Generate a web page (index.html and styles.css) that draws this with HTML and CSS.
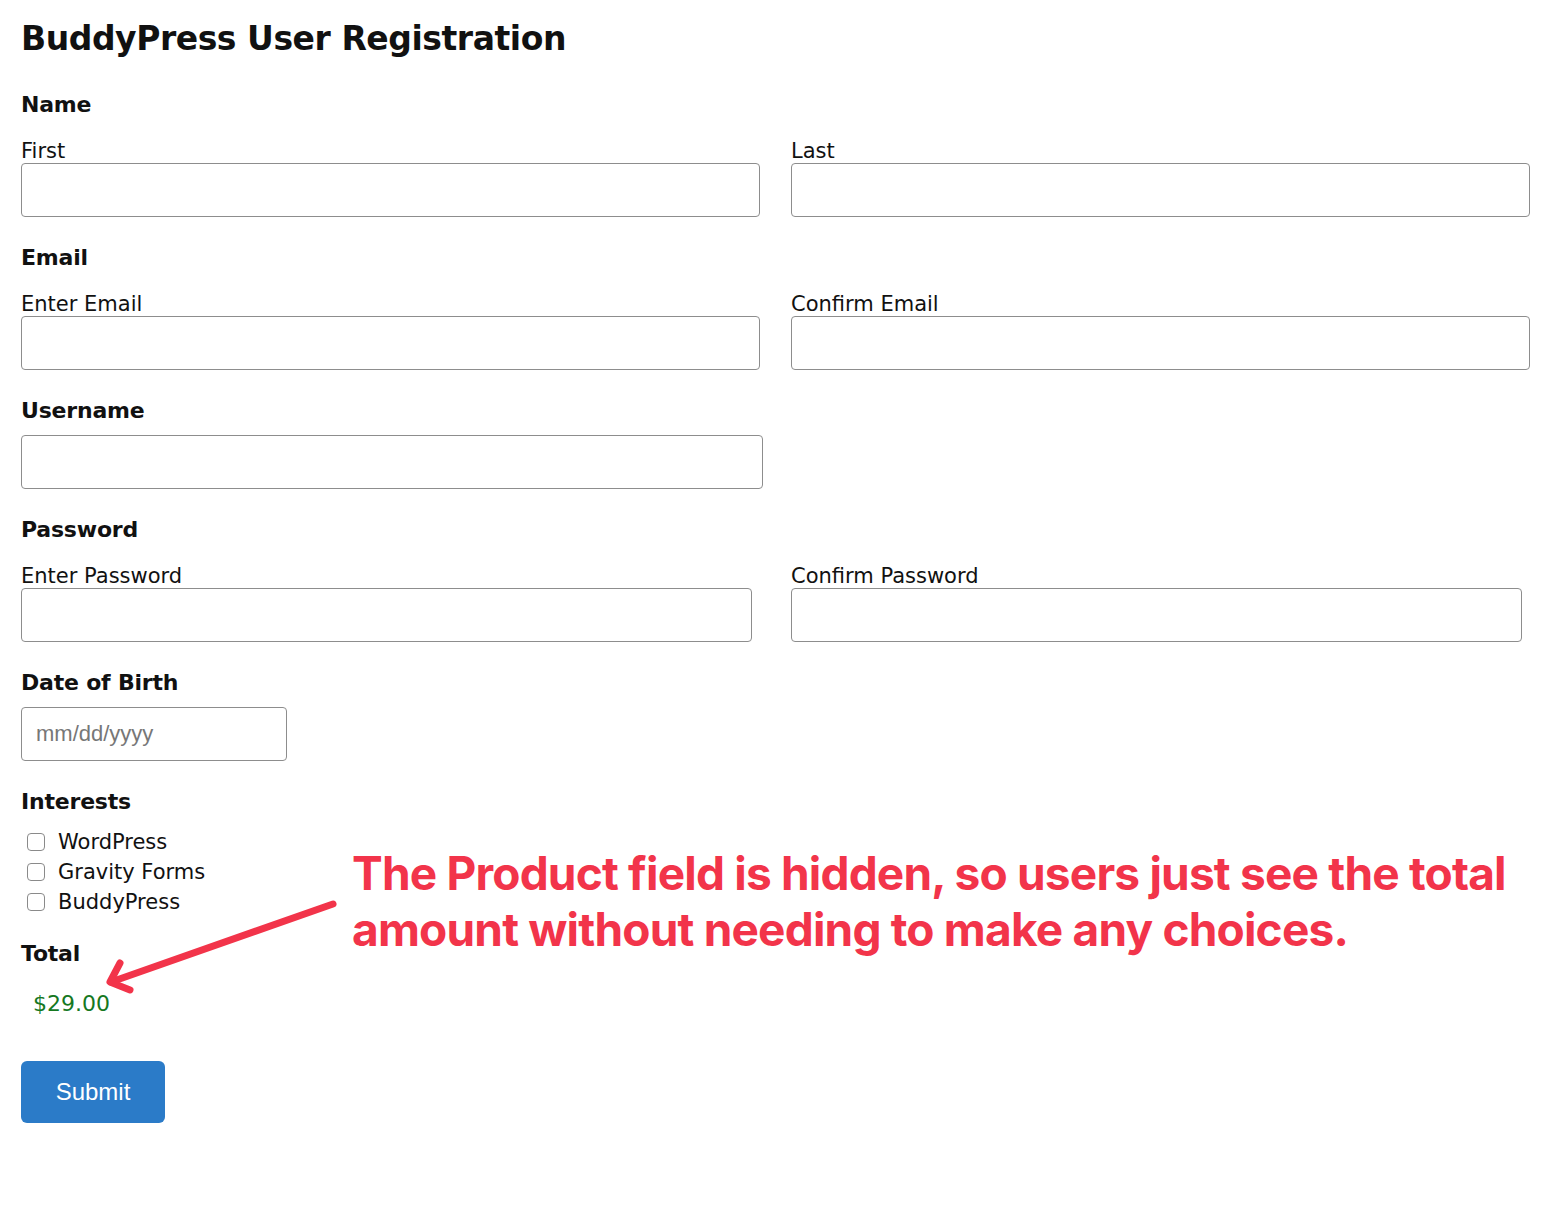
FILE: index.html
```html
<!DOCTYPE html>
<html lang="en">
<head>
    <meta charset="UTF-8">
    <meta name="viewport" content="width=device-width, initial-scale=1.0">
    <title>BuddyPress User Registration</title>
    <link rel="stylesheet" href="styles.css">
</head>
<body>
    <div class="page">
        <h1>BuddyPress User Registration</h1>

        <form class="reg-form" action="#" method="POST">
            <!-- Name -->
            <div class="field field-first">
                <div class="field-title">Name</div>
                <div class="pair">
                    <label class="sub">
                        <span>First</span>
                        <input type="text" name="first">
                    </label>
                    <label class="sub">
                        <span>Last</span>
                        <input type="text" name="last">
                    </label>
                </div>
            </div>

            <!-- Email -->
            <div class="field">
                <div class="field-title">Email</div>
                <div class="pair">
                    <label class="sub">
                        <span>Enter Email</span>
                        <input type="email" name="email">
                    </label>
                    <label class="sub">
                        <span>Confirm Email</span>
                        <input type="email" name="email2">
                    </label>
                </div>
            </div>

            <!-- Username -->
            <div class="field">
                <div class="field-title">Username</div>
                <input class="single username" type="text" name="username">
            </div>

            <!-- Password -->
            <div class="field">
                <div class="field-title">Password</div>
                <div class="pair pair-pass">
                    <label class="sub">
                        <span>Enter Password</span>
                        <input type="password" name="pass">
                    </label>
                    <label class="sub">
                        <span>Confirm Password</span>
                        <input type="password" name="pass2">
                    </label>
                </div>
            </div>

            <!-- Date of Birth -->
            <div class="field">
                <div class="field-title">Date of Birth</div>
                <input class="single dob" type="text" name="dob" placeholder="mm/dd/yyyy">
            </div>

            <!-- Interests -->
            <div class="field">
                <div class="field-title">Interests</div>
                <ul class="checks">
                    <li><label><input type="checkbox" name="int[]" value="wp"> WordPress</label></li>
                    <li><label><input type="checkbox" name="int[]" value="gf"> Gravity Forms</label></li>
                    <li><label><input type="checkbox" name="int[]" value="bp"> BuddyPress</label></li>
                </ul>
            </div>

            <!-- Total -->
            <div class="field field-total">
                <div class="field-title">Total</div>
                <div class="total">$29.00</div>
            </div>

            <button type="submit" class="submit-btn">Submit</button>
        </form>

        <!-- Пояснение поверх формы -->
        <div class="note">The Product field is hidden, so users just see the total amount without needing to make any choices.</div>
        <svg class="note-arrow" width="360" height="140" viewBox="0 0 360 140">
            <path d="M333 44 L111 122" fill="none" stroke="#f2344a" stroke-width="7" stroke-linecap="round"/>
            <path d="M120 103 L110 122 L130 130" fill="none" stroke="#f2344a" stroke-width="7" stroke-linecap="round" stroke-linejoin="round"/>
        </svg>
    </div>
</body>
</html>
```

FILE: styles.css
```css
/* Base */
body {
    margin: 0;
    background-color: #fff;
    color: #111;
    font-family: "DejaVu Sans", Verdana, sans-serif;
}

.page {
    position: relative;
    width: 1509px;
    padding: 17px 20px 60px 21px;
}

h1 {
    margin: 0;
    font-size: 33px;
    line-height: 44px;
    font-weight: bold;
    letter-spacing: -0.45px;
}

.field {
    margin-top: 28px;
}

.field-first {
    margin-top: 31px;
}

.field-title {
    font-size: 22px;
    line-height: 26px;
    font-weight: bold;
    letter-spacing: -0.2px;
    margin-bottom: 11px;
}

.pair {
    display: grid;
    grid-template-columns: 739px 739px;
    column-gap: 31px;
    margin-top: 21px;
}

.pair-pass {
    grid-template-columns: 731px 731px;
    column-gap: 39px;
}

.sub span {
    display: block;
    font-size: 21px;
    line-height: 24px;
}

input[type="text"],
input[type="email"],
input[type="password"] {
    display: block;
    box-sizing: border-box;
    width: 100%;
    height: 54px;
    margin: 0;
    border: 1.5px solid #8d8d8d;
    border-radius: 4px;
    background: #fff;
    font-family: "Liberation Sans", Arial, sans-serif;
    font-size: 22px;
    padding: 0 14px;
}

.username {
    width: 742px !important;
}

.dob {
    width: 266px !important;
}

.dob::placeholder {
    color: #777;
}

/* Checkboxes */
.checks {
    list-style: none;
    margin: 12px 0 0;
    padding: 0;
}

.checks li {
    font-size: 21px;
    line-height: 30px;
}

.checks label {
    display: flex;
    align-items: center;
}

.checks input {
    appearance: none;
    width: 18px;
    height: 18px;
    margin: 0 13px 0 6px;
    border: 1.5px solid #8a8a8a;
    border-radius: 4px;
    background: #fff;
}

.field-total {
    margin-top: 24px;
}

.field-total .field-title {
    margin-bottom: 25px;
}

.total {
    padding-left: 12px;
    font-size: 22px;
    line-height: 24px;
    color: #16781f;
}

.submit-btn {
    display: block;
    margin-top: 45px;
    width: 144px;
    height: 62px;
    border: none;
    border-radius: 6px;
    background-color: #2b7bc8;
    color: #fff;
    font-family: "Liberation Sans", Arial, sans-serif;
    font-size: 24px;
    cursor: pointer;
}

/* Annotation */
.note {
    position: absolute;
    left: 352px;
    top: 845px;
    width: 1190px;
    font-family: Inter, "Noto Sans", sans-serif;
    font-weight: 700;
    font-size: 46px;
    line-height: 56px;
    letter-spacing: -0.8px;
    color: #f2344a;
}

.note-arrow {
    position: absolute;
    left: 0;
    top: 860px;
}
```
